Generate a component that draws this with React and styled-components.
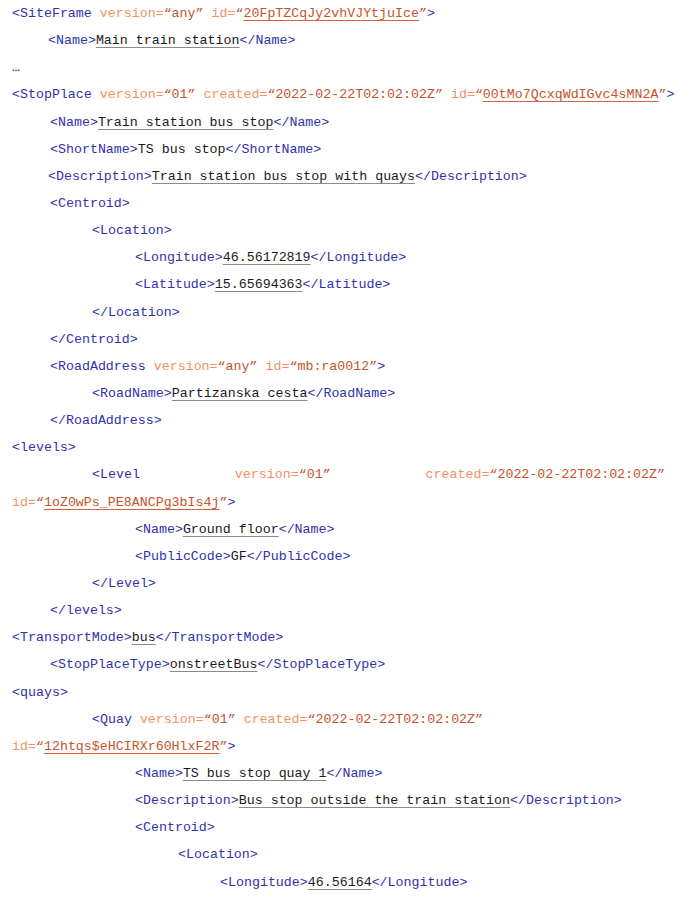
import React from "react";
import styled, { createGlobalStyle } from "styled-components";

const GlobalStyle = createGlobalStyle`
  html, body {
    margin: 0;
    padding: 0;
    background: #ffffff;
  }
  body {
    font-family: "Liberation Mono", "Courier New", monospace;
    font-size: 13.3px;
    color: #1a1a1a;
  }
`

const indents = [12, 49, 92, 135, 178, 220]

const Listing = styled.div`
  display: flex;
  flex-direction: column;
  padding-right: 14px;
`

const Line = styled.div`
  display: flex;
  align-items: baseline;
  justify-content: ${props => (props.justify ? "space-between" : "flex-start")};
  height: 27.15px;
  line-height: 27.15px;
  padding-left: ${props => indents[props.level || 0] + (props.nudge || 0)}px;
  white-space: pre;
`

const Tag = styled.span`
  color: #3131ad;
`

const AttrName = styled.span`
  color: #f39063;
`

const AttrValue = styled.span`
  color: #c6532c;
  text-decoration: ${props => (props.link ? "underline" : "none")};
  text-decoration-color: #d0643c;
  text-underline-offset: 3px;
`

const Content = styled.span`
  color: #1a1a1a;
  text-decoration: ${props => (props.plain ? "none" : "underline")};
  text-decoration-color: #8a8a8a;
  text-underline-offset: 3px;
`

const Attr = ({ name, value, link }) => (
  <>
    <AttrName>{" " + name + "="}</AttrName>
    <AttrValue>“</AttrValue>
    <AttrValue link={link}>{value}</AttrValue>
    <AttrValue>”</AttrValue>
  </>
)

const Element = ({ level, nudge, name, text, plain }) => (
  <Line level={level} nudge={nudge}>
    <Tag>{`<${name}>`}</Tag>
    <Content plain={plain}>{text}</Content>
    <Tag>{`</${name}>`}</Tag>
  </Line>
)

const Open = ({ level, nudge, name }) => (
  <Line level={level} nudge={nudge}>
    <Tag>{`<${name}>`}</Tag>
  </Line>
)

export default function App() {
  return (
    <>
      <GlobalStyle />
      <Listing>
        <Line level={0}>
          <Tag>&lt;SiteFrame</Tag>
          <Attr name="version" value="any" />
          <Attr name="id" value="20FpTZCqJy2vhVJYtjuIce" link />
          <Tag>&gt;</Tag>
        </Line>
        <Element level={1} nudge={-1} name="Name" text="Main train station" />
        <Line level={0}>
          <Content plain>…</Content>
        </Line>
        <Line level={0}>
          <Tag>&lt;StopPlace</Tag>
          <Attr name="version" value="01" />
          <Attr name="created" value="2022-02-22T02:02:02Z" />
          <Attr name="id" value="00tMo7QcxqWdIGvc4sMN2A" link />
          <Tag>&gt;</Tag>
        </Line>
        <Element level={1} nudge={1} name="Name" text="Train station bus stop" />
        <Element level={1} nudge={1} name="ShortName" text="TS bus stop" plain />
        <Element level={1} nudge={-1} name="Description" text="Train station bus stop with quays" />
        <Open level={1} nudge={1} name="Centroid" />
        <Open level={2} name="Location" />
        <Element level={3} name="Longitude" text="46.56172819" />
        <Element level={3} name="Latitude" text="15.65694363" />
        <Open level={2} name="/Location" />
        <Open level={1} nudge={1} name="/Centroid" />
        <Line level={1} nudge={1}>
          <Tag>&lt;RoadAddress</Tag>
          <Attr name="version" value="any" />
          <Attr name="id" value="mb:ra0012" />
          <Tag>&gt;</Tag>
        </Line>
        <Element level={2} name="RoadName" text="Partizanska cesta" />
        <Open level={1} nudge={1} name="/RoadAddress" />
        <Open level={0} name="levels" />
        <Line level={2} justify>
          <Tag>&lt;Level</Tag>
          <span>
            <AttrName>version=</AttrName>
            <AttrValue>“01”</AttrValue>
          </span>
          <span>
            <AttrName>created=</AttrName>
            <AttrValue>“2022-02-22T02:02:02Z”</AttrValue>
          </span>
        </Line>
        <Line level={0}>
          <AttrName>id=</AttrName>
          <AttrValue>“</AttrValue>
          <AttrValue link>1oZ0wPs_PE8ANCPg3bIs4j</AttrValue>
          <AttrValue>”</AttrValue>
          <Tag>&gt;</Tag>
        </Line>
        <Element level={3} name="Name" text="Ground floor" />
        <Element level={3} name="PublicCode" text="GF" plain />
        <Open level={2} name="/Level" />
        <Open level={1} nudge={1} name="/levels" />
        <Element level={0} name="TransportMode" text="bus" />
        <Element level={1} nudge={1} name="StopPlaceType" text="onstreetBus" />
        <Open level={0} name="quays" />
        <Line level={2}>
          <Tag>&lt;Quay</Tag>
          <Attr name="version" value="01" />
          <Attr name="created" value="2022-02-22T02:02:02Z" />
        </Line>
        <Line level={0}>
          <AttrName>id=</AttrName>
          <AttrValue>“</AttrValue>
          <AttrValue link>12htqs$eHCIRXr60HlxF2R</AttrValue>
          <AttrValue>”</AttrValue>
          <Tag>&gt;</Tag>
        </Line>
        <Element level={3} name="Name" text="TS bus stop quay 1" />
        <Element level={3} name="Description" text="Bus stop outside the train station" />
        <Open level={3} name="Centroid" />
        <Open level={4} name="Location" />
        <Element level={5} name="Longitude" text="46.56164" />
      </Listing>
    </>
  );
}
